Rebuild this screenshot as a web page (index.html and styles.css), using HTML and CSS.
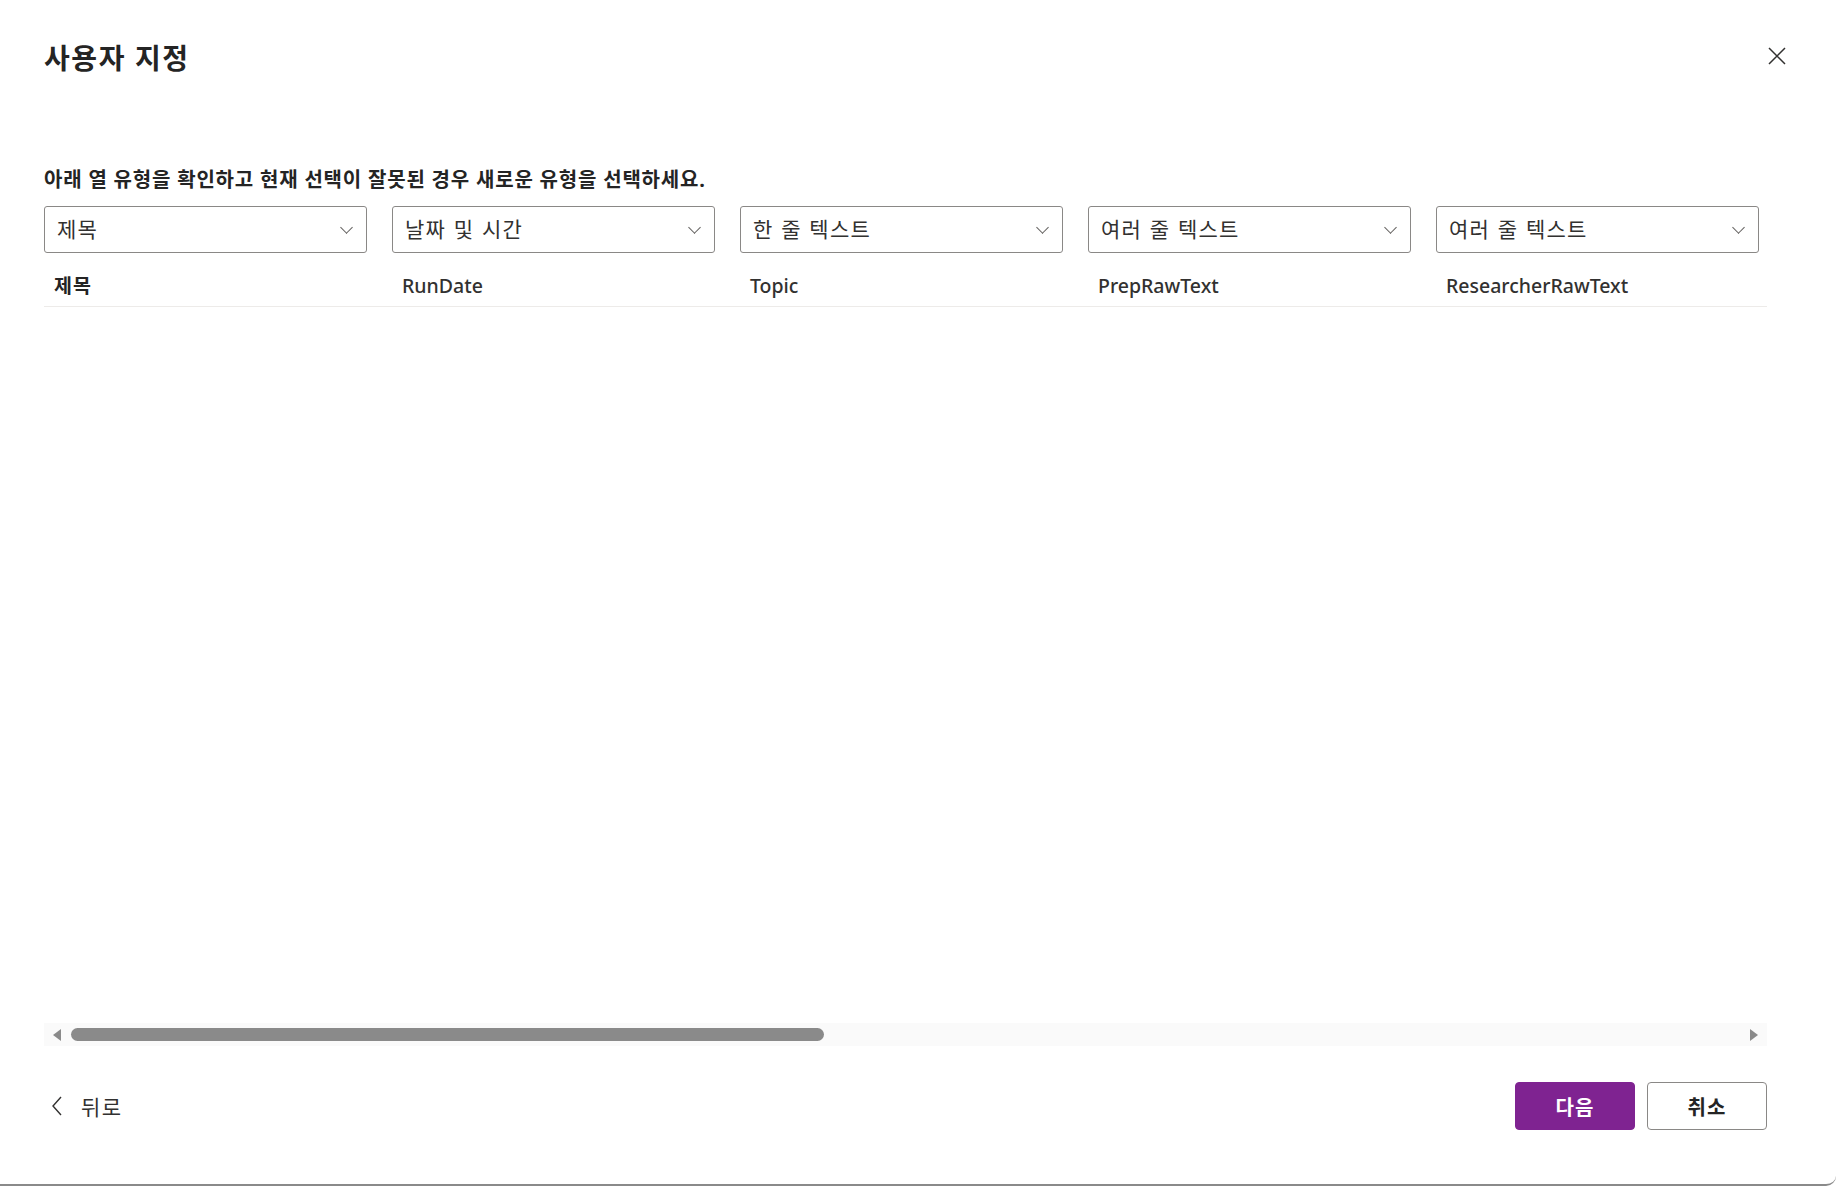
FILE: index.html
```html
<!DOCTYPE html>
<html>
	<head>
		<meta charset="utf-8">
		<title>사용자 지정</title>
		<link rel="stylesheet" href="styles.css">
	</head>
	<body>
        <div class="dialog">
            <div class="head">
                <h1 class="title">사용자 지정</h1>
                <a class="close" href="javascript:void(0)">
                    <svg width="18" height="18" viewBox="0 0 18 18"><path d="M1 1 L17 17 M17 1 L1 17" stroke="#323130" stroke-width="1.5" fill="none"/></svg>
                </a>
            </div>
            <p class="hint">아래 열 유형을 확인하고 현재 선택이 잘못된 경우 새로운 유형을 선택하세요.</p>
            <div class="grid">
                <div class="track">
                    <div class="col">
                        <div class="select"><span>제목</span><i class="chev"></i></div>
                        <div class="colname bold">제목</div>
                    </div>
                    <div class="col">
                        <div class="select"><span>날짜 및 시간</span><i class="chev"></i></div>
                        <div class="colname">RunDate</div>
                    </div>
                    <div class="col">
                        <div class="select"><span>한 줄 텍스트</span><i class="chev"></i></div>
                        <div class="colname">Topic</div>
                    </div>
                    <div class="col">
                        <div class="select"><span>여러 줄 텍스트</span><i class="chev"></i></div>
                        <div class="colname">PrepRawText</div>
                    </div>
                    <div class="col last">
                        <div class="select"><span>여러 줄 텍스트</span><i class="chev"></i></div>
                        <div class="colname">ResearcherRawText</div>
                    </div>
                </div>
            </div>
            <div class="scrollbar">
                <i class="arrow left"></i>
                <div class="thumb"></div>
                <i class="arrow right"></i>
            </div>
            <div class="foot">
                <a class="back" href="javascript:void(0)">
                    <svg width="12" height="20" viewBox="0 0 12 20"><path d="M10 1 L2 10 L10 19" stroke="#323130" stroke-width="1.4" fill="none"/></svg>
                    <span>뒤로</span>
                </a>
                <div class="btns">
                    <a class="btn primary" href="javascript:void(0)">다음</a>
                    <a class="btn" href="javascript:void(0)">취소</a>
                </div>
            </div>
        </div>
	</body>
</html>
```

FILE: styles.css
```css
*{
    padding: 0;
    margin: 0;
    box-sizing: border-box;
}
a {
    text-decoration: none;
    color: inherit;
}
html,body{
    width: 100%;
    height: 100%;
    background: #fff;
}
body {
    font-family: "Noto Sans", "Noto Sans CJK KR", sans-serif;
    color: #323130;
    overflow: hidden;
}
.dialog {
    height: 1186px;
    padding: 0 69px 0 44px;
    display: flex;
    flex-direction: column;
    border-bottom: 2px solid #8a8a8a;
    border-bottom-right-radius: 10px;
}
.head {
    display: flex;
    justify-content: space-between;
    align-items: flex-start;
    padding-top: 40px;
}
.title {
    font-size: 28px;
    line-height: 36px;
    font-weight: 700;
    letter-spacing: 1.6px;
    color: #242424;
}
.close {
    margin: 7px -19px 0 0;
    width: 18px;
    height: 18px;
    display: block;
}
.close svg {
    display: block;
}
.hint {
    margin-top: 90px;
    font-size: 20px;
    line-height: 28px;
    font-weight: 700;
    letter-spacing: 0.8px;
    color: #242424;
}
.grid {
    margin-top: 12px;
    flex: 1;
    overflow: hidden;
}
.track {
    display: flex;
    width: 1740px;
    border-bottom: 1px solid #edebe9;
}
.col {
    width: 323px;
    margin-right: 25px;
    flex-shrink: 0;
}
.select {
    height: 47px;
    border: 1px solid #8a8886;
    border-radius: 3px;
    display: flex;
    align-items: center;
    justify-content: space-between;
    padding: 0 13px 3px 12px;
    font-size: 21px;
    letter-spacing: 1.2px;
    color: #323130;
}
.select span {
    word-spacing: 1px;
}
.chev {
    width: 9px;
    height: 9px;
    border-right: 1px solid #605e5c;
    border-bottom: 1px solid #605e5c;
    transform: rotate(45deg);
    margin: -2px 2px 0 0;
}
.colname {
    padding: 19px 0 6px 10px;
    font-size: 19.5px;
    line-height: 28px;
    font-weight: 500;
    color: #323130;
}
.colname.bold {
    font-weight: 700;
    letter-spacing: 1px;
    color: #242424;
}
.scrollbar {
    height: 23px;
    background: #fafafa;
    display: flex;
    align-items: center;
    padding: 0 9px;
}
.arrow {
    width: 0;
    height: 0;
    border-top: 6px solid transparent;
    border-bottom: 6px solid transparent;
}
.arrow.left {
    border-right: 8px solid #8a8a8a;
}
.arrow.right {
    border-left: 8px solid #8a8a8a;
    margin-left: auto;
}
.thumb {
    margin-left: 10px;
    width: 753px;
    height: 13px;
    border-radius: 7px;
    background: #8a8a8a;
}
.foot {
    margin: 36px 0 54px;
    height: 48px;
    display: flex;
    align-items: center;
    justify-content: space-between;
}
.back {
    display: flex;
    align-items: center;
    gap: 18px;
    padding-left: 7px;
    font-size: 21px;
    letter-spacing: 1.5px;
    color: #323130;
}
.back svg {
    display: block;
}
.btns {
    display: flex;
    gap: 12px;
}
.btn {
    width: 120px;
    height: 48px;
    border: 1px solid #8a8886;
    border-radius: 4px;
    display: flex;
    align-items: center;
    justify-content: center;
    font-size: 20px;
    font-weight: 700;
    letter-spacing: 1px;
    color: #242424;
    background: #fff;
}
.btn.primary {
    background: #7f2391;
    border-color: #7f2391;
    color: #fff;
}
```
